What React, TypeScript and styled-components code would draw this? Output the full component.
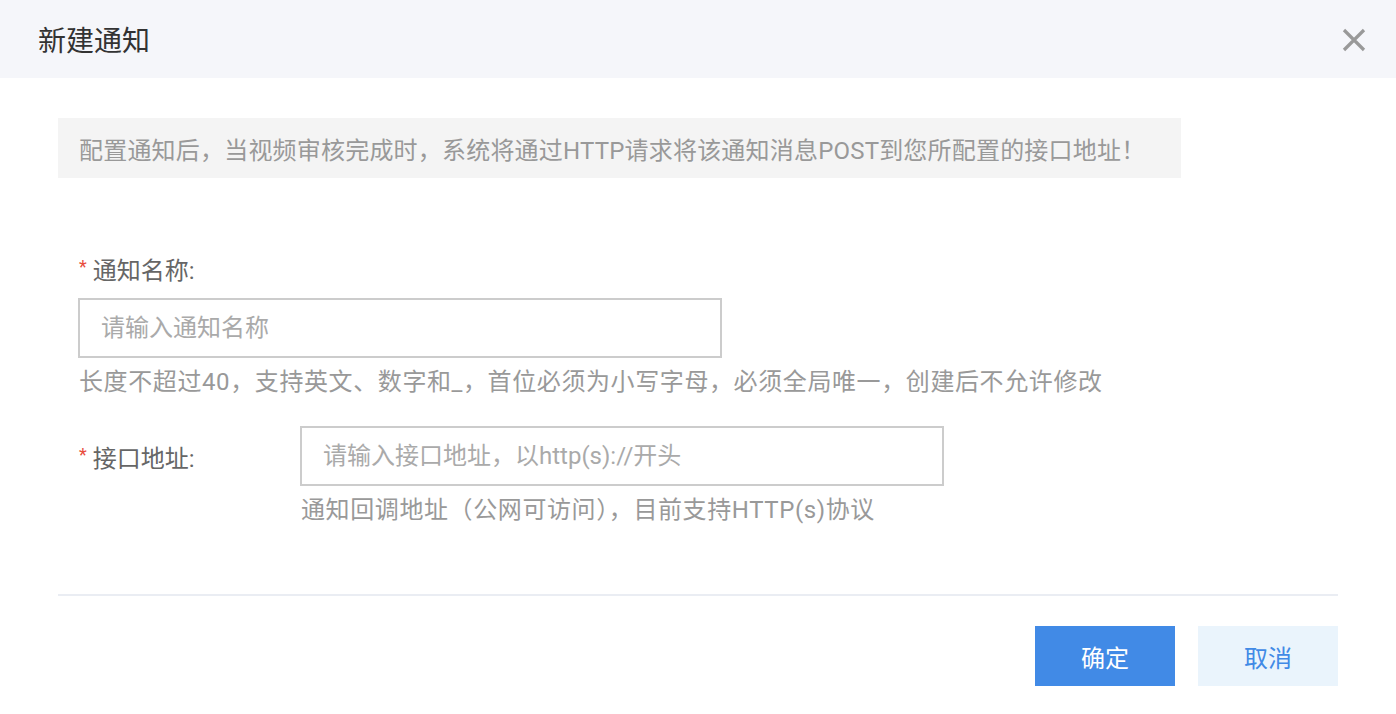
import { createGlobalStyle, styled } from 'styled-components';

const GlobalStyle = createGlobalStyle`
  body {
    margin: 0;
    background: #fff;
    font-family: Roboto, "Noto Sans CJK SC", sans-serif;
  }
  * {
    box-sizing: border-box;
  }
`;

const fields = {
  name: {
    label: '通知名称:',
    placeholder: '请输入通知名称',
    hint: '长度不超过40，支持英文、数字和_，首位必须为小写字母，必须全局唯一，创建后不允许修改'
  },
  url: {
    label: '接口地址:',
    placeholder: '请输入接口地址，以http(s)://开头',
    hint: '通知回调地址（公网可访问），目前支持HTTP(s)协议'
  }
};

const CloseIcon = () => (
  <svg width="24" height="24" viewBox="0 0 24 24">
    <path d="M2 2L22 22M22 2L2 22" stroke="#999" strokeWidth="3.2" fill="none" />
  </svg>
);

const App = () => {
  return (
    <Dialog>
      <GlobalStyle />
      <Header>
        <Title>新建通知</Title>
        <CloseButton>
          <CloseIcon />
        </CloseButton>
      </Header>
      <Body>
        <Notice>配置通知后，当视频审核完成时，系统将通过HTTP请求将该通知消息POST到您所配置的接口地址！</Notice>
        <Form>
          <StackedField>
            <Label>
              <Required>*</Required>
              {fields.name.label}
            </Label>
            <Input placeholder={fields.name.placeholder} />
            <Hint>{fields.name.hint}</Hint>
          </StackedField>
          <InlineField>
            <InlineLabel>
              <Required>*</Required>
              {fields.url.label}
            </InlineLabel>
            <FieldColumn>
              <Input placeholder={fields.url.placeholder} />
              <Hint>{fields.url.hint}</Hint>
            </FieldColumn>
          </InlineField>
        </Form>
        <Divider />
        <Footer>
          <Button $primary>确定</Button>
          <Button>取消</Button>
        </Footer>
      </Body>
    </Dialog>
  );
};

const Dialog = styled.div`
  width: 1396px;
  height: 714px;
  background: #fff;
  overflow: hidden;
`;

const Header = styled.div`
  display: flex;
  align-items: center;
  justify-content: space-between;
  height: 78px;
  padding: 0 30px 0 38px;
  background: #f5f6fa;
`;

const Title = styled.div`
  font-size: 28px;
  color: #333;
`;

const CloseButton = styled.div`
  display: flex;
  align-items: center;
  justify-content: center;
  width: 24px;
  height: 24px;
  margin-top: 2px;
  cursor: pointer;
`;

const Body = styled.div`
  padding: 40px 58px 0;
`;

const Notice = styled.div`
  width: 1123px;
  height: 60px;
  display: flex;
  align-items: center;
  padding-left: 21px;
  background: #f4f4f4;
  color: #999;
  font-size: 24px;
  letter-spacing: 0.2px;
  white-space: nowrap;
`;

const Form = styled.div`
  display: flex;
  flex-direction: column;
  gap: 30px;
  padding: 76px 0 0 21px;
`;

const StackedField = styled.div`
  display: flex;
  flex-direction: column;
  align-items: flex-start;
`;

const InlineField = styled.div`
  display: flex;
  align-items: flex-start;
`;

const Label = styled.div`
  display: flex;
  align-items: center;
  height: 28px;
  margin-bottom: 16px;
  font-size: 24px;
  color: #666;
`;

const InlineLabel = styled(Label)`
  width: 222px;
  height: 60px;
  margin-bottom: 0;
`;

const Required = styled.span`
  color: #e84c3d;
  font-size: 18px;
  margin-right: 6px;
  position: relative;
  top: -2px;
`;

const FieldColumn = styled.div`
  display: flex;
  flex-direction: column;
`;

const Input = styled.input`
  width: 644px;
  height: 60px;
  margin: 0 0 0 -1px;
  padding: 0 21px;
  border: 2px solid #ccc;
  outline: none;
  font-family: inherit;
  font-size: 24px;
  color: #333;
  background: #fff;

  &::placeholder {
    color: #aaa;
  }
`;

const Hint = styled.div`
  margin-top: 10px;
  line-height: 28px;
  font-size: 24px;
  letter-spacing: 0.6px;
  color: #999;
  white-space: nowrap;
`;

const Divider = styled.div`
  height: 2px;
  margin-top: 70px;
  background: #eaedf3;
`;

const Footer = styled.div`
  display: flex;
  justify-content: flex-end;
  gap: 23px;
  padding-top: 30px;
`;

const Button = styled.button<{ $primary?: boolean }>`
  width: 140px;
  height: 60px;
  border: none;
  font-family: inherit;
  font-size: 24px;
  cursor: pointer;
  background: ${(p) => (p.$primary ? '#418ae6' : '#eaf4fc')};
  color: ${(p) => (p.$primary ? '#fff' : '#418ae6')};
`;

export default App;
